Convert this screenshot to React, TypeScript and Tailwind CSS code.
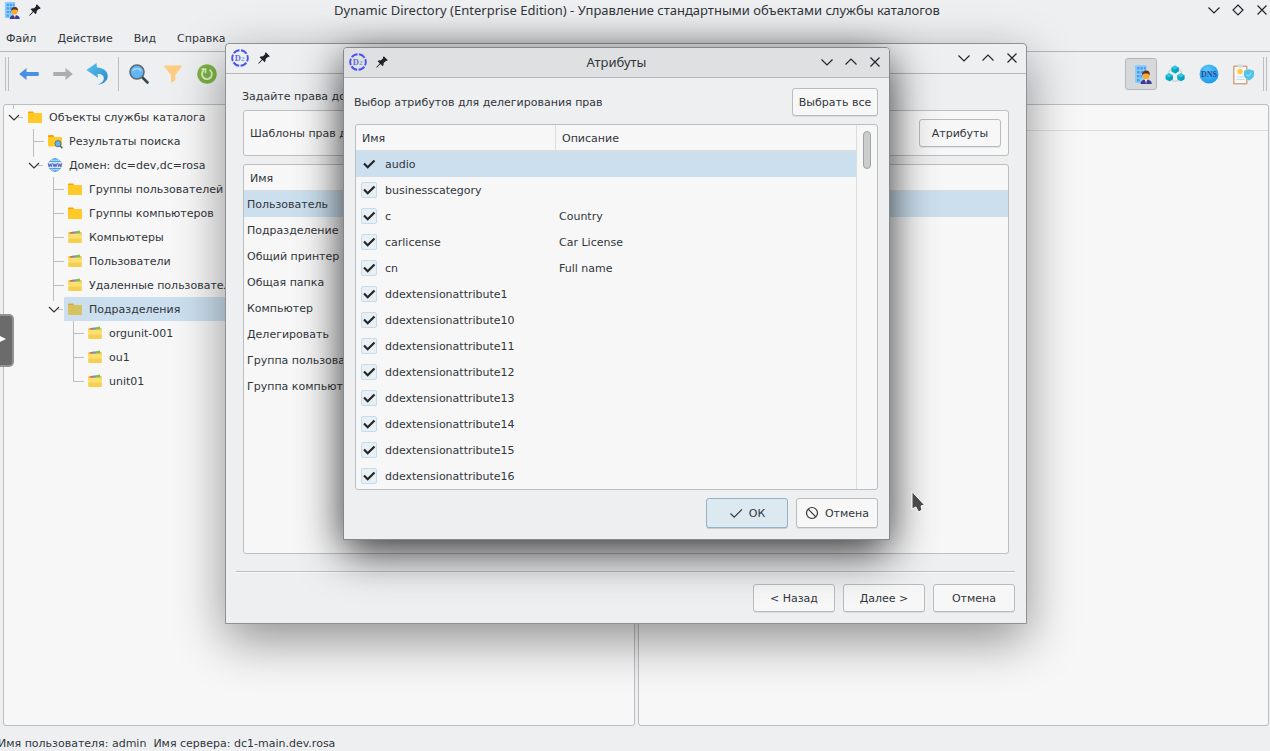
import React, { useState } from 'react';

interface TreeNode {
  label: string;
  level: number;
  icon: 'folder' | 'search' | 'globe' | 'files';
  expanded?: boolean;
  last?: boolean;
  selected?: boolean;
}

interface Attribute {
  name: string;
  description?: string;
}

interface IconProps {
  className?: string;
}

const TREE: TreeNode[] = [
  { label: 'Объекты службы каталога', level: 0, icon: 'folder', expanded: true, last: true },
  { label: 'Результаты поиска', level: 1, icon: 'search' },
  { label: 'Домен: dc=dev,dc=rosa', level: 1, icon: 'globe', expanded: true, last: true },
  { label: 'Группы пользователей', level: 2, icon: 'folder' },
  { label: 'Группы компьютеров', level: 2, icon: 'folder' },
  { label: 'Компьютеры', level: 2, icon: 'files' },
  { label: 'Пользователи', level: 2, icon: 'files' },
  { label: 'Удаленные пользователи', level: 2, icon: 'files' },
  { label: 'Подразделения', level: 2, icon: 'folder', expanded: true, last: true, selected: true },
  { label: 'orgunit-001', level: 3, icon: 'files' },
  { label: 'ou1', level: 3, icon: 'files' },
  { label: 'unit01', level: 3, icon: 'files', last: true },
];

const TEMPLATES = [
  'Пользователь',
  'Подразделение',
  'Общий принтер',
  'Общая папка',
  'Компьютер',
  'Делегировать',
  'Группа пользователей',
  'Группа компьютеров',
];

const ATTRIBUTES: Attribute[] = [
  { name: 'audio' },
  { name: 'businesscategory' },
  { name: 'c', description: 'Country' },
  { name: 'carlicense', description: 'Car License' },
  { name: 'cn', description: 'Full name' },
  { name: 'ddextensionattribute1' },
  { name: 'ddextensionattribute10' },
  { name: 'ddextensionattribute11' },
  { name: 'ddextensionattribute12' },
  { name: 'ddextensionattribute13' },
  { name: 'ddextensionattribute14' },
  { name: 'ddextensionattribute15' },
  { name: 'ddextensionattribute16' },
];

/* ---------- icons ---------- */

const DirectoryIcon = ({ className }: IconProps): React.ReactElement => (
  <svg viewBox="0 0 18 20" className={className}>
    <path d="M1 1.5Q1 1 1.5 1H12q.5 0 .5.5V19H1z" fill="#90caf9" />
    <path
      d="M3 3h2.5v2.500H3zM6.500 3H9v2.500H6.500zM10 3h1.800v2.500H10zM3 7h2.500v2.500H3zM6.500 7H9v2.500H6.500zM10 7h1.800v2H10zM3 11h2.500v2.500H3zM6.500 11H8v2.500H6.500zM3 15h2.500v2.500H3z"
      fill="#42a0f5"
    />
    <path d="M6.500 20c0-3 2-4.500 5.500-4.500s5.700 1.500 5.700 4.500z" fill="#303f9f" />
    <path d="M10.500 15h3L12 19.500z" fill="#fff" />
    <path d="M12 16l-.7 3.500h1.500z" fill="#e53935" />
    <circle cx="12" cy="11.800" r="3.400" fill="#ffa726" />
    <path d="M8.200 11.500c-.5-3.500 1.500-5 4-5s4 1.700 3.500 5c-.8-1.800-2-2-4-2-1.800 0-3 .5-3.500 2z" fill="#5d3423" />
  </svg>
);

const PinIcon = ({ className }: IconProps): React.ReactElement => (
  <svg viewBox="0 0 16 16" className={className} fill="#1f2326">
    <path d="M9.800 2.200l4 4-1.300.9-.6-.2-2.300 2.200c.2 1.500-.1 2.400-.9 3.200L6.500 10.100 3 13.500l-.8.200.2-.8 3.400-3.500-2.200-2.200c.8-.8 1.900-1 3.200-.8l2.300-2.200-.2-.6z" />
  </svg>
);

const LogoIcon = ({ className }: IconProps): React.ReactElement => (
  <svg viewBox="0 0 18 18" className={className}>
    <circle
      cx="9"
      cy="9"
      r="7.800"
      fill="none"
      stroke="#4a55f0"
      strokeWidth="1.900"
      strokeDasharray="6.700 1.470"
      strokeDashoffset="3.300"
    />
    <text x="3.800" y="12" fontSize="8.500" fontWeight="bold" fill="#5a6ee0" className="font-['Liberation_Serif',serif]">
      D
    </text>
    <text x="10" y="12" fontSize="7" fontWeight="bold" fill="#6f9fd0" className="font-['Liberation_Serif',serif]">
      2
    </text>
  </svg>
);

const DownIcon = ({ className }: IconProps): React.ReactElement => (
  <svg viewBox="0 0 16 16" className={className} fill="none" stroke="#232629" strokeWidth="1.200">
    <path d="M2.500 5.500L8 11l5.500-5.500" />
  </svg>
);

const UpIcon = ({ className }: IconProps): React.ReactElement => (
  <svg viewBox="0 0 16 16" className={className} fill="none" stroke="#232629" strokeWidth="1.200">
    <path d="M2.500 10.500L8 5l5.500 5.500" />
  </svg>
);

const DiamondIcon = ({ className }: IconProps): React.ReactElement => (
  <svg viewBox="0 0 16 16" className={className} fill="none" stroke="#232629" strokeWidth="1.200">
    <path d="M8 3l5 5-5 5-5-5z" />
  </svg>
);

const CloseIcon = ({ className }: IconProps): React.ReactElement => (
  <svg viewBox="0 0 16 16" className={className} fill="none" stroke="#232629" strokeWidth="1.200">
    <path d="M3.500 3.500l9 9M12.500 3.500l-9 9" />
  </svg>
);

const BackIcon = (): React.ReactElement => (
  <svg viewBox="0 0 22 22" className="size-[22px]">
    <path d="M1.200 11L8.500 5v4H20q.8 0 .8.800v2.400q0 .8-.8.800H8.500v4z" fill="#4a90e2" />
  </svg>
);

const ForwardIcon = (): React.ReactElement => (
  <svg viewBox="0 0 22 22" className="size-[22px]">
    <path d="M20.800 11L13.500 5v4H2q-.8 0-.8.800v2.400q0 .8.800.8h11.500v4z" fill="#acadaf" />
  </svg>
);

const UndoIcon = (): React.ReactElement => (
  <svg viewBox="0 0 22 22" className="size-[22px]">
    <defs>
      <linearGradient id="undo" x1="0" y1="0" x2="1" y2="1">
        <stop offset="0" stopColor="#5cc3ee" />
        <stop offset="1" stopColor="#2489c8" />
      </linearGradient>
    </defs>
    <path
      d="M.3 7L10.500 0 11 4.500C18 5 21.700 8.500 21.700 13c0 4.500-3.500 8-10.500 9 5-2 7-4.500 6.500-7.500-.4-2.500-2.700-3.700-6.200-3.700l.5 4z"
      fill="url(#undo)"
    />
  </svg>
);

const SearchIcon = (): React.ReactElement => (
  <svg viewBox="0 0 22 22" className="size-[22px]">
    <path d="M13.500 13.500l6 6" stroke="#37474f" strokeWidth="2.600" strokeLinecap="round" />
    <circle cx="9" cy="9" r="7" fill="#64b5f6" stroke="#5a6a73" strokeWidth="1.600" />
    <path d="M5 7.500c1.800-2.600 6-2.600 8 0" stroke="#bbdefb" strokeWidth="1.300" fill="none" strokeLinecap="round" />
  </svg>
);

const FilterIcon = (): React.ReactElement => (
  <svg viewBox="0 0 22 22" className="size-[22px]">
    <path d="M2 3.200q0-.7.700-.7h16.600q.7 0 .7.700L13.200 12v5.500L9 19.800V12z" fill="#ffcc80" />
  </svg>
);

const RefreshIcon = (): React.ReactElement => (
  <svg viewBox="0 0 22 22" className="size-[22px]">
    <circle cx="11" cy="11" r="9.800" fill="#7cb342" />
    <path d="M13.500 6.800a5 5 0 1 1-5.800.500" fill="none" stroke="#dcedc8" strokeWidth="1.900" />
    <path d="M5.500 6.200h4v4" fill="none" stroke="#dcedc8" strokeWidth="1.700" />
  </svg>
);

const HexIcon = (): React.ReactElement => (
  <svg viewBox="0 0 22 22" className="size-[22px]">
    <circle cx="11" cy="11.500" r="6.800" fill="none" stroke="#cfd3d5" strokeWidth="1.300" />
    {[
      [11, 6.500],
      [5.200, 14.300],
      [16.800, 14.300],
    ].map(([x, y]) => (
      <g key={`${x}-${y}`} transform={`translate(${x} ${y})`}>
        <path d="M0-4L3.600-2v4L0 4-3.600 2v-4z" fill="#00b0c8" />
        <path d="M0-4L3.600-2 0 .2-3.600-2z" fill="#35c8dc" />
        <path d="M0 .2L3.600-2v4L0 4z" fill="#0a9fb8" />
      </g>
    ))}
  </svg>
);

const DnsIcon = (): React.ReactElement => (
  <svg viewBox="0 0 22 22" className="size-[22px]">
    <defs>
      <radialGradient id="dns" cx=".4" cy=".3" r=".7">
        <stop offset="0" stopColor="#5cc8fa" />
        <stop offset="1" stopColor="#1e9be6" />
      </radialGradient>
    </defs>
    <circle cx="11" cy="11" r="9.500" fill="url(#dns)" />
    <text
      x="11"
      y="13.800"
      textAnchor="middle"
      fontSize="8"
      fontWeight="bold"
      fill="#27459c"
      className="font-['Liberation_Serif',serif]"
    >
      DNS
    </text>
  </svg>
);

const PolicyIcon = (): React.ReactElement => (
  <svg viewBox="0 0 22 22" className="size-[22px]">
    <rect x="1" y="2.500" width="14.500" height="19" rx="1" fill="#d7a586" />
    <rect x="2.500" y="4" width="11.500" height="16" fill="#f7f8f9" />
    <path d="M5.500 1.500h5.500v3H5.500z" fill="#d5dadd" />
    <circle cx="8" cy="8.500" r="2.700" fill="#ffc83d" />
    <path d="M4.500 14h7M4.500 16.500h8" stroke="#b8dff2" />
    <path d="M17 6.300l5 1.500v4c0 2.500-2 4.300-5 5.700-3-1.400-5-3.200-5-5.700v-4z" fill="#4fc3ea" />
    <path d="M14.500 11.500l1.800 1.600 3-2.800" stroke="#c9effb" fill="none" />
  </svg>
);

const FolderIcon = ({ muted }: { muted?: boolean }): React.ReactElement => (
  <svg viewBox="0 0 16 16" className="size-4 shrink-0">
    <path d="M1 3.500q0-1 1-1h4l1.500 2H14v4H1z" fill={muted ? '#cfa93f' : '#ffa000'} />
    <rect x="1" y="4" width="14" height="10" rx="1" fill={muted ? '#d6c25e' : '#ffca28'} />
  </svg>
);

const FolderSearchIcon = (): React.ReactElement => (
  <svg viewBox="0 0 16 16" className="size-4 shrink-0">
    <path d="M1 3q0-1 1-1h4l1.500 2H14v4H1z" fill="#ffa000" />
    <rect x="1" y="4" width="14" height="9.500" rx="1" fill="#ffca28" />
    <path d="M13 12.800l2.400 2.400" stroke="#455a64" strokeWidth="1.400" />
    <circle cx="11" cy="10.700" r="3.100" fill="#64b5f6" stroke="#546e7a" strokeWidth=".9" />
  </svg>
);

const FilesIcon = (): React.ReactElement => (
  <svg viewBox="0 0 16 16" className="size-4 shrink-0">
    <path d="M1.300 3.200h13.400v4H1.300z" fill="#efb93a" />
    <path d="M3 3.300l3.500-.8v2.500H3z" fill="#e8633a" />
    <path d="M6 2.800l3.500-.5v2.500H6z" fill="#5b9bd5" />
    <path d="M9 2.200l3.800-.6.4 2.600H9z" fill="#7cc04b" />
    <path d="M1.300 4.800h13.400v8.200q0 1-1 1H2.300q-1 0-1-1z" fill="#fae070" />
    <path d="M1.300 9.500h13.400v3.500q0 1-1 1H2.300q-1 0-1-1z" fill="#f5cf50" />
  </svg>
);

const GlobeIcon = (): React.ReactElement => (
  <svg viewBox="0 0 16 16" className="size-4 shrink-0">
    <g fill="none" stroke="#4aa3e8" strokeWidth="1">
      <circle cx="8" cy="8" r="6.300" />
      <ellipse cx="8" cy="8" rx="3" ry="6.300" />
      <path d="M2.500 4.500h11M2.500 11.500h11M8 1.700v12.600" />
    </g>
    <rect x="1" y="5.500" width="14" height="5" fill="#e3ecfa" />
    <path
      d="M1.200 6.200l1 3.600 1-3 1 3 1-3.600M5.900 6.200l1.100 3.600L8 6.800l1 3 1.100-3.600M10.800 6.200l1 3.600 1-3 1 3 1-3.600"
      fill="none"
      stroke="#3f51b5"
      strokeWidth=".9"
    />
  </svg>
);

const CursorIcon = ({ className }: IconProps): React.ReactElement => (
  <svg viewBox="0 0 16 24" className={className}>
    <path d="M2 1.500v17.500l3.800-2 2.800 5 3.400-2-1-4 3.500-1z" fill="#4a4a4a" stroke="#fff" strokeWidth="1" />
  </svg>
);

/* ---------- window parts ---------- */

const TitleButtons = ({ middle }: { middle: React.ReactNode }): React.ReactElement => (
  <div className="flex w-20 justify-end gap-2">
    <button type="button" aria-label="Свернуть">
      <DownIcon className="size-4" />
    </button>
    <button type="button" aria-label="Развернуть">
      {middle}
    </button>
    <button type="button" aria-label="Закрыть">
      <CloseIcon className="size-4" />
    </button>
  </div>
);

interface DialogHeaderProps {
  title?: string;
  className?: string;
}

const DialogHeader = ({ title, className = '' }: DialogHeaderProps): React.ReactElement => (
  <header className={`flex h-[30px] shrink-0 items-center border-b border-[#b4b6b8] px-1.5 pb-px ${className}`}>
    <div className="flex w-20 items-center gap-2">
      <LogoIcon className="-mx-px size-[18px]" />
      <PinIcon className="size-4" />
    </div>
    <h2 className="flex-1 text-center font-['Noto_Sans',sans-serif] text-[13px] leading-4">{title}</h2>
    <TitleButtons middle={<UpIcon className="size-4" />} />
  </header>
);

interface DialogButtonProps {
  children: React.ReactNode;
  className?: string;
  onClick?: () => void;
}

const DialogButton = ({ children, className = 'h-7 w-[82px]', onClick }: DialogButtonProps): React.ReactElement => (
  <button
    type="button"
    onClick={onClick}
    className={`flex items-center justify-center rounded-[3px] border border-[#b9bbbd] bg-[#f7f7f7] shadow-[0_1px_0_rgba(0,0,0,0.08)] ${className}`}
  >
    {children}
  </button>
);

const ToolButton = ({ label, children }: { label: string; children: React.ReactNode }): React.ReactElement => (
  <button type="button" aria-label={label} className="flex h-8 w-[34px] items-center justify-center">
    {children}
  </button>
);

const ToolHandle = (): React.ReactElement => (
  <div className="h-[34px] w-1 border-x border-[#bcbebf]" />
);

/* ---------- main window ---------- */

// Connector lines and the expander arrow in front of a tree item
const Branch = ({ node }: { node: TreeNode }): React.ReactElement => (
  <svg viewBox="0 0 20 24" className="h-6 w-5 shrink-0" fill="none" stroke="#bcbebf">
    {node.expanded ? (
      <>
        <path d="M9.500 0v4M14 12.500h5" />
        <path d="M5 10l5 5 5-5" stroke="#31363b" strokeWidth="1.200" />
      </>
    ) : (
      <path d={node.last ? 'M9.500 0v12.500H20' : 'M9.500 0v24M10 12.500h10'} />
    )}
  </svg>
);

const NodeIcon = ({ node }: { node: TreeNode }): React.ReactElement => {
  if (node.icon === 'search') return <FolderSearchIcon />;
  if (node.icon === 'globe') return <GlobeIcon />;
  if (node.icon === 'files') return <FilesIcon />;
  return <FolderIcon muted={node.selected} />;
};

const DirectoryTree = (): React.ReactElement => (
  <ul role="tree" className="flex-1 overflow-hidden rounded-[3px] border border-[#bcbebf] bg-[#f7f7f7]">
    {TREE.map((node) => (
      <li
        key={node.label}
        role="treeitem"
        aria-level={node.level + 1}
        aria-selected={Boolean(node.selected)}
        className="flex h-6"
      >
        <span className="shrink-0" style={{ width: node.level * 20 }} />
        <Branch node={node} />
        <span
          className={`flex flex-1 items-center gap-1.5 pl-[3px] whitespace-nowrap ${node.selected ? 'bg-[#cbdfee]' : ''}`}
        >
          <NodeIcon node={node} />
          {node.label}
        </span>
      </li>
    ))}
  </ul>
);

const MainWindow = (): React.ReactElement => (
  <div className="flex h-screen flex-col">
    <header className="flex h-6 shrink-0 items-center pb-1 pl-1">
      <div className="flex w-20 items-center gap-[7px]">
        <DirectoryIcon className="h-[18px] w-4" />
        <PinIcon className="size-4" />
      </div>
      <h1 className="flex-1 text-center font-['Noto_Sans',sans-serif] text-[13px] leading-4">
        Dynamic Directory (Enterprise Edition) - Управление стандартными объектами службы каталогов
      </h1>
      <TitleButtons middle={<DiamondIcon className="size-4" />} />
    </header>

    <nav className="flex h-7 shrink-0 items-center gap-[21px] border-b border-[#b4b6b8] pt-0.5 pl-1.5">
      <button type="button">Файл</button>
      <button type="button">Действие</button>
      <button type="button">Вид</button>
      <button type="button">Справка</button>
    </nav>

    <div className="flex h-[52px] shrink-0 items-center justify-between px-[3px] pb-2">
      <div className="flex items-center pl-0.5">
        <ToolHandle />
        <div className="ml-[3px] flex">
          <ToolButton label="Назад">
            <BackIcon />
          </ToolButton>
          <ToolButton label="Вперед">
            <ForwardIcon />
          </ToolButton>
          <ToolButton label="Отменить">
            <UndoIcon />
          </ToolButton>
        </div>
        <div className="mr-[3px] ml-1 h-[34px] w-px bg-[#bcbebf]" />
        <ToolButton label="Поиск">
          <SearchIcon />
        </ToolButton>
        <ToolButton label="Фильтр">
          <FilterIcon />
        </ToolButton>
        <ToolButton label="Обновить">
          <RefreshIcon />
        </ToolButton>
      </div>
      <div className="flex items-center">
        <button
          type="button"
          aria-label="Объекты"
          aria-pressed="true"
          className="mx-px flex size-8 items-center justify-end rounded-[3px] border border-[#b4b6b8] bg-[#d6d8da] pr-1"
        >
          <DirectoryIcon className="h-5 w-[18px]" />
        </button>
        <ToolButton label="Сайты">
          <HexIcon />
        </ToolButton>
        <ToolButton label="DNS">
          <DnsIcon />
        </ToolButton>
        <ToolButton label="Политики">
          <PolicyIcon />
        </ToolButton>
        <div className="ml-[3px]">
          <ToolHandle />
        </div>
      </div>
    </div>

    <main className="flex min-h-0 flex-1 gap-[3px] pr-px pl-[3px]">
      <DirectoryTree />
      <section className="flex-1 rounded-[3px] border border-[#bcbebf] bg-[#f7f7f7]">
        <div className="h-[26px] border-b border-[#dcdddf]" />
      </section>
    </main>

    <footer className="-ml-0.5 flex h-[25px] shrink-0 items-center gap-[7px] pt-2.5">
      <span>Имя пользователя: admin</span>
      <span>Имя сервера: dc1-main.dev.rosa</span>
    </footer>
  </div>
);

/* ---------- dialogs ---------- */

const DelegationDialog = (): React.ReactElement => (
  <section
    role="dialog"
    aria-label="Делегирование прав"
    className="absolute top-[43px] left-[225px] flex h-[581px] w-[802px] flex-col rounded-t-[4px] border border-[#8f9294] bg-[#eeeff1] shadow-[0_16px_50px_rgba(0,0,0,0.42)]"
  >
    <DialogHeader />
    <div className="flex min-h-0 flex-1 flex-col px-[17px] pt-4">
      <p className="-ml-px leading-[13px]">Задайте права до</p>
      <div className="mt-[7px] flex h-[46px] shrink-0 items-center justify-between rounded-[3px] border border-[#bcbebf] bg-[#f7f7f7] pr-[7px] pl-1.5">
        <span>Шаблоны прав д</span>
        <DialogButton>Атрибуты</DialogButton>
      </div>
      <div className="mt-2 flex-1 overflow-hidden rounded-[3px] border border-[#bcbebf] bg-[#f7f7f7]">
        <table className="w-full border-separate border-spacing-0 text-left">
          <thead>
            <tr>
              <th className="h-[26px] border-b border-[#dcdddf] px-1.5 pt-0.5 font-normal">Имя</th>
            </tr>
          </thead>
          <tbody>
            {TEMPLATES.map((name, i) => (
              <tr key={name} className={i === 0 ? 'bg-[#cbdfee]' : ''}>
                <td className="h-[26px] px-[3px]">{name}</td>
              </tr>
            ))}
          </tbody>
        </table>
      </div>
    </div>
    <footer className="mt-[17px] mr-[11px] ml-2.5 flex justify-end gap-2 border-t border-[#bcbebf] pt-3 pb-[11px] shadow-[inset_0_1px_0_#fafafa]">
      <DialogButton>&lt; Назад</DialogButton>
      <DialogButton>Далее &gt;</DialogButton>
      <DialogButton>Отмена</DialogButton>
    </footer>
  </section>
);

const AttributesDialog = (): React.ReactElement => {
  const [checked, setChecked] = useState<string[]>(ATTRIBUTES.map((a) => a.name));

  const toggle = (name: string): void => {
    setChecked((prev) => (prev.includes(name) ? prev.filter((n) => n !== name) : [...prev, name]));
  };

  return (
    <section
      role="dialog"
      aria-label="Атрибуты"
      className="absolute top-[47px] left-[343px] flex h-[493px] w-[547px] flex-col rounded-t-[4px] border border-[#85888a] bg-[#eeeff1] shadow-[0_12px_44px_rgba(0,0,0,0.8)]"
    >
      <DialogHeader title="Атрибуты" className="rounded-t-[3px] bg-[#dee0e2]" />
      <div className="flex min-h-0 flex-1 flex-col gap-2 px-[11px] pt-2.5 pb-[11px]">
        <div className="flex items-center justify-between">
          <p className="-ml-px">Выбор атрибутов для делегирования прав</p>
          <DialogButton className="h-7 w-[86px]" onClick={() => setChecked(ATTRIBUTES.map((a) => a.name))}>
            Выбрать все
          </DialogButton>
        </div>

        <div className="flex min-h-0 flex-1 overflow-hidden rounded-[3px] border border-[#bcbebf] bg-[#f7f7f7]">
          <div className="flex-1 overflow-hidden">
            <table className="w-full table-fixed border-separate border-spacing-0 text-left">
              <thead>
                <tr>
                  <th className="h-[26px] w-[200px] border-r border-b border-[#dcdddf] px-1.5 pt-0.5 font-normal">Имя</th>
                  <th className="h-[26px] border-b border-[#dcdddf] px-1.5 pt-0.5 font-normal">Описание</th>
                </tr>
              </thead>
              <tbody>
                {ATTRIBUTES.map((attr, i) => (
                  <tr key={attr.name} className={i === 0 ? 'bg-[#cbdfee]' : ''}>
                    <td className="h-[26px] p-0 pl-[5px]">
                      <label className="relative flex h-[26px] items-center gap-2">
                        <input
                          type="checkbox"
                          checked={checked.includes(attr.name)}
                          onChange={() => toggle(attr.name)}
                          className={`peer size-4 appearance-none rounded-[2px] border ${
                            i === 0 ? 'border-transparent' : 'border-[#c5dcec] bg-[#e8f0f5]'
                          }`}
                        />
                        <svg
                          viewBox="0 0 16 16"
                          className="pointer-events-none invisible absolute left-0 size-4 peer-checked:visible"
                          fill="none"
                          stroke="#232629"
                          strokeWidth="2.200"
                        >
                          <path d="M3 7.500l3.700 3.700L13.500 4.500" />
                        </svg>
                        {attr.name}
                      </label>
                    </td>
                    <td className="h-[26px] px-[3px]">{attr.description}</td>
                  </tr>
                ))}
              </tbody>
            </table>
          </div>
          <div className="flex w-[21px] justify-center border-l border-[#dcdddf] pt-1.5">
            <div className="h-[38px] w-2 rounded-full border border-[#a0a3a4] bg-[#cbcccc]" />
          </div>
        </div>

        <div className="flex justify-end gap-2">
          <button
            type="button"
            className="flex h-[30px] w-[82px] items-center justify-center gap-1.5 rounded-[3px] border border-[#92b2c8] bg-[#dde9f1] shadow-[0_1px_0_rgba(0,0,0,0.15)]"
          >
            <svg viewBox="0 0 14 14" className="size-3.5" fill="none" stroke="#31363b" strokeWidth="1.200">
              <path d="M1.500 7.500l3.700 3.700L13 3.300" />
            </svg>
            ОК
          </button>
          <DialogButton className="h-[30px] w-[82px] gap-1.5">
            <svg viewBox="0 0 14 14" className="size-3.5" fill="none" stroke="#31363b" strokeWidth="1.200">
              <circle cx="7" cy="7" r="5.500" />
              <path d="M3.200 3.200l7.600 7.600" />
            </svg>
            Отмена
          </DialogButton>
        </div>
      </div>
    </section>
  );
};

const App = (): React.ReactElement => (
  <div className="relative h-screen overflow-hidden bg-[#eeeff1] font-['DejaVu_Sans',sans-serif] text-[11px] leading-[17px] text-[#31363b]">
    <MainWindow />
    <DelegationDialog />
    <AttributesDialog />
    <button
      type="button"
      aria-label="Показать панель"
      className="absolute top-[314px] left-0 flex h-[53px] w-3.5 items-center rounded-r-[5px] border-y-2 border-r-2 border-[#929292] bg-[#6b6b6b] pb-1"
    >
      <svg viewBox="0 0 6 6" className="size-1.5" fill="#fff">
        <path d="M0 0l6 3-6 3z" />
      </svg>
    </button>
    <CursorIcon className="pointer-events-none absolute top-[490px] left-[910px] h-6 w-4" />
  </div>
);

export default App;
